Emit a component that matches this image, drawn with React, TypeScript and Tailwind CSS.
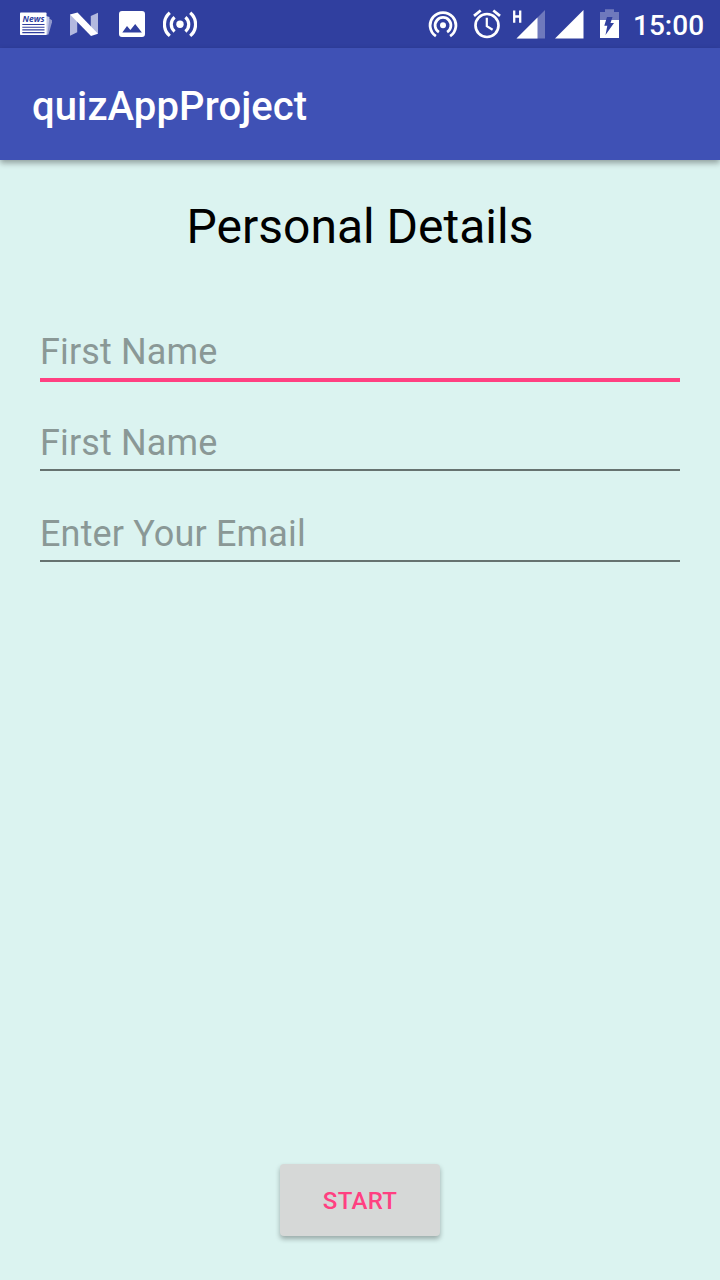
import React from "react";

const NewsIcon = () => (
  <svg className="ml-5 h-12 w-8 shrink-0" viewBox="0 0 32 48" fill="none">
    <path d="M28.5 18l4 2.5-4 14H26z" fill="#8f97cc" />
    <path d="M26 16l3.5 1-2.2 17.8H25z" fill="#c3c8e6" />
    <rect y="12.5" width="26.5" height="22.5" rx=".8" fill="#fff" />
    <text x="2.5" y="22" textLength="22" lengthAdjust="spacingAndGlyphs" fontSize="9" fontWeight="700" fontStyle="italic" fontFamily="Open Sans, sans-serif" fill="#303f9f">News</text>
    <path d="M2.3 24.5H24.5M2.3 27.2H24.5M2.3 29.9H24.5M2.3 32.6H24.5" stroke="#303f9f" strokeWidth="1.1" />
  </svg>
);

const NIcon = () => (
  <svg className="ml-[18px] h-12 w-7 shrink-0" viewBox="0 0 28 48">
    <path d="M0 14.5v21.3l7.2-3.6V17z" fill="#b3b9df" />
    <path d="M28 12.8v21L20.8 31V16z" fill="#b3b9df" />
    <path d="M0 14.5L7.5 12.5 28 33.8 21 36z" fill="#fff" />
  </svg>
);

const PictureIcon = () => (
  <svg className="ml-[21px] h-12 w-[26px] shrink-0" viewBox="0 0 26 48">
    <path fillRule="evenodd" fill="#fff" d="M3 11h20a3 3 0 013 3v20a3 3 0 01-3 3H3a3 3 0 01-3-3V14a3 3 0 013-3zM3.3 32.4h19.6L16.2 24l-4.8 6.1-3.4-4z" />
  </svg>
);

const BroadcastIcon = () => (
  <svg className="ml-[18px] h-12 w-[34px] shrink-0" viewBox="0 0 34 48" fill="none" stroke="#fff" strokeWidth="3.2">
    <circle cx="17" cy="24.3" r="3.7" fill="#fff" stroke="none" />
    <path d="M11.6 17.2a9.2 9.2 0 000 14.2M22.4 17.2a9.2 9.2 0 010 14.2" />
    <path d="M6.8 12.7a15.2 15.2 0 000 23.2M27.2 12.7a15.2 15.2 0 010 23.2" />
  </svg>
);

const HotspotIcon = () => (
  <svg className="ml-auto h-12 w-[30px] shrink-0" viewBox="0 0 30 48" fill="none" stroke="#fff" strokeWidth="2.8">
    <circle cx="15" cy="25.2" r="3" fill="#fff" stroke="none" />
    <path d="M10.9 32.1a7.9 7.9 0 118.2 0" />
    <path d="M7.9 36.2a12.9 12.9 0 1114.2 0" />
  </svg>
);

const AlarmIcon = () => (
  <svg className="ml-[14px] h-12 w-[30px] shrink-0" viewBox="0 0 30 48" fill="none" stroke="#fff">
    <circle cx="15" cy="25.5" r="11.5" strokeWidth="2.7" />
    <path d="M14.8 17.7v8.4l5.8 3.6" strokeWidth="2.2" />
    <path d="M2 15.8l6.7-5.3M28 15.8l-6.7-5.3" strokeWidth="2.8" />
  </svg>
);

const MobileSignalIcon = () => (
  <svg className="ml-[10px] h-12 w-[33px] shrink-0" viewBox="0 0 33 48">
    <path d="M4.5 38.5L33 10v28.5z" fill="#6f79bc" />
    <path d="M4.5 38.5L25.5 17.5v21z" fill="#fff" />
    <path d="M2.2 10.5v12.2M8.2 10.5v12.2M2.2 16.5h6" fill="none" stroke="#fff" strokeWidth="2.3" />
  </svg>
);

const SignalIcon = () => (
  <svg className="ml-[10px] h-12 w-[29px] shrink-0" viewBox="0 0 29 48">
    <path d="M0 38.5L28.5 10v28.5z" fill="#fff" />
  </svg>
);

const BatteryIcon = () => (
  <svg className="ml-4 h-12 w-[19px] shrink-0" viewBox="0 0 19 48">
    <path d="M0 12h5V9.2h9V12h5v8H0z" fill="#6f79bc" />
    <path d="M0 20h19v18H0z" fill="#fff" />
    <path d="M7 17h5.5l-2 6H14L5.5 35l1.8-9.2H4.3z" fill="#303f9f" />
  </svg>
);

const fields = [
  { id: "first", hint: "First Name", box: "h-[62px] border-b-4 border-[#ff4081] pb-[5px]" },
  { id: "last", hint: "First Name", box: "h-[89px] border-b-2 border-[#667270] pb-[5px]" },
  { id: "email", hint: "Enter Your Email", box: "h-[91px] border-b-2 border-[#667270] pb-[5px]" },
];

export default function App() {
  return (
    <div className="flex h-[1280px] w-[720px] flex-col overflow-hidden bg-[#dbf3f0] font-['Roboto',sans-serif]">
      <div className="flex h-12 shrink-0 items-center bg-[#303f9f] pr-4">
        <NewsIcon />
        <NIcon />
        <PictureIcon />
        <BroadcastIcon />
        <HotspotIcon />
        <AlarmIcon />
        <MobileSignalIcon />
        <SignalIcon />
        <BatteryIcon />
        <span className="ml-[14px] w-[71px] whitespace-nowrap pt-[3px] text-[28px] font-medium leading-[45px] text-white">15:00</span>
      </div>
      <header className="flex h-28 shrink-0 items-center bg-[#3f51b5] px-8 pt-1.5 shadow-[0_3px_6px_rgba(0,0,0,0.35)]">
        <h1 className="text-[40px] font-medium leading-[48px] tracking-[0.1px] text-white">quizAppProject</h1>
      </header>
      <main className="flex flex-1 flex-col px-10 pb-11">
        <h2 className="mt-[39px] text-center text-[48px] leading-[56px] text-black">Personal Details</h2>
        <form className="mt-[65px] flex flex-col">
          {fields.map((f) => (
            <label key={f.id} className={`flex items-end ${f.box}`}>
              <input
                type="text"
                placeholder={f.hint}
                className="h-[42px] w-full bg-transparent p-0 text-[36px] leading-[42px] tracking-[0.15px] outline-none placeholder:text-[#8a9896] placeholder:opacity-100"
              />
            </label>
          ))}
        </form>
        <button className="mt-auto h-[72px] w-40 self-center rounded-[4px] bg-[#d6d8d7] pt-0.5 text-[24px] font-medium tracking-[0.3px] text-[#ff4081] shadow-[0_3px_5px_rgba(0,0,0,0.3)]">
          START
        </button>
      </main>
    </div>
  );
}
